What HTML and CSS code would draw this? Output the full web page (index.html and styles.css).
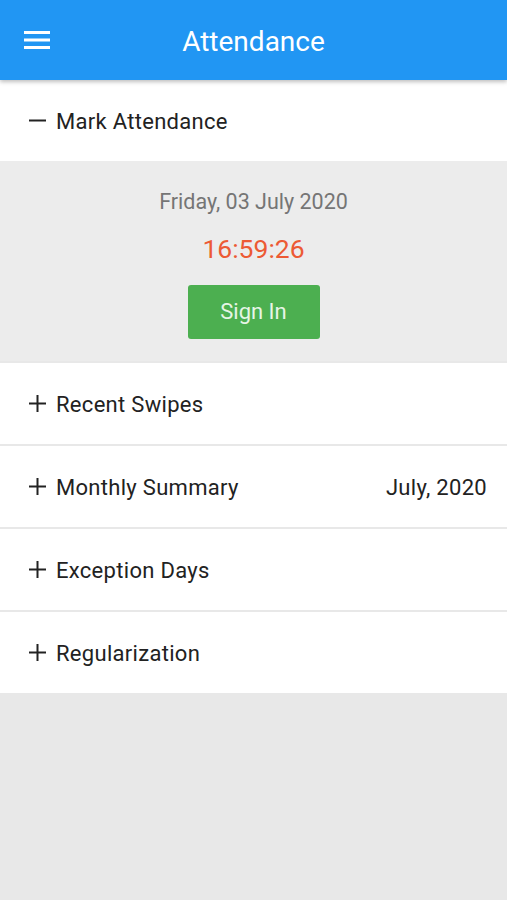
FILE: index.html
```html
<!DOCTYPE html>
<html lang="en">
<head>
    <meta charset="UTF-8">
    <meta name="viewport" content="width=device-width, initial-scale=1.0">
    <title>Attendance</title>
    <link rel="stylesheet" href="styles.css">
</head>
<body>
    <!-- top bar -->
    <header class="app-bar">
        <button class="menu-btn" aria-label="Menu">
            <svg width="26" height="20" viewBox="0 0 26 20">
                <rect x="0" y="1" width="26" height="3" fill="#fff"/>
                <rect x="0" y="8.5" width="26" height="3" fill="#fff"/>
                <rect x="0" y="16" width="26" height="3" fill="#fff"/>
            </svg>
        </button>
        <h1 class="app-title">Attendance</h1>
    </header>

    <main class="content">
        <!-- open section -->
        <section class="panel">
            <div class="panel-head">
                <svg class="toggle" width="17" height="17" viewBox="0 0 17 17">
                    <rect x="0" y="7.5" width="17" height="2" fill="#222"/>
                </svg>
                <span class="panel-title">Mark Attendance</span>
            </div>
            <div class="panel-body">
                <p class="date">Friday, 03 July 2020</p>
                <p class="clock">16:59:26</p>
                <button class="sign-in">Sign In</button>
            </div>
        </section>

        <section class="panel">
            <div class="panel-head">
                <svg class="toggle" width="17" height="17" viewBox="0 0 17 17">
                    <rect x="0" y="7.5" width="17" height="2" fill="#222"/>
                    <rect x="7.5" y="0" width="2" height="17" fill="#222"/>
                </svg>
                <span class="panel-title">Recent Swipes</span>
            </div>
        </section>

        <section class="panel">
            <div class="panel-head">
                <svg class="toggle" width="17" height="17" viewBox="0 0 17 17">
                    <rect x="0" y="7.5" width="17" height="2" fill="#222"/>
                    <rect x="7.5" y="0" width="2" height="17" fill="#222"/>
                </svg>
                <span class="panel-title">Monthly Summary</span>
                <span class="panel-extra">July, 2020</span>
            </div>
        </section>

        <section class="panel">
            <div class="panel-head">
                <svg class="toggle" width="17" height="17" viewBox="0 0 17 17">
                    <rect x="0" y="7.5" width="17" height="2" fill="#222"/>
                    <rect x="7.5" y="0" width="2" height="17" fill="#222"/>
                </svg>
                <span class="panel-title">Exception Days</span>
            </div>
        </section>

        <section class="panel">
            <div class="panel-head">
                <svg class="toggle" width="17" height="17" viewBox="0 0 17 17">
                    <rect x="0" y="7.5" width="17" height="2" fill="#222"/>
                    <rect x="7.5" y="0" width="2" height="17" fill="#222"/>
                </svg>
                <span class="panel-title">Regularization</span>
            </div>
        </section>
    </main>
</body>
</html>
```

FILE: styles.css
```css
/* base */
body {
    margin: 0;
    padding: 0;
    font-family: Roboto, "Noto Sans", sans-serif;
    background: #e8e8e8;
    color: #222;
    min-height: 900px;
}
.app-bar {
    height: 80px;
    background-color: #2196f3;
    display: flex;
    align-items: center;
    position: relative;
    box-shadow: 0 2px 4px rgba(0, 0, 0, 0.25);
    z-index: 1;
}
.menu-btn {
    background: none;
    border: none;
    padding: 0;
    margin-left: 24px;
    width: 26px;
    height: 20px;
    display: flex;
}
.app-title {
    flex: 1;
    margin: 0 0 0 -50px;
    text-align: center;
    color: #fff;
    font-weight: 400;
    font-size: 28px;
    line-height: 32px;
    padding-top: 3px;
}
.content {
    display: flex;
    flex-direction: column;
    gap: 2px;
}
.panel {
    background: #fff;
}
.panel-head {
    height: 81px;
    display: flex;
    align-items: center;
    padding: 0 20px 0 29px;
    background: #fff;
}
.toggle {
    flex: none;
    margin-right: 10px;
}
.panel-title {
    flex: 1;
    font-size: 22px;
    letter-spacing: 0.3px;
    padding-top: 2px;
}
.panel-extra {
    font-size: 22px;
    letter-spacing: 0.3px;
    padding-top: 2px;
}
.panel-body {
    background: #ececec;
    height: 200px;
    display: flex;
    flex-direction: column;
    align-items: center;
}
.date {
    margin: 28px 0 0;
    font-size: 21.5px;
    line-height: 26px;
    color: #757575;
}
.clock {
    margin: 18px 0 0;
    font-size: 26.5px;
    line-height: 32px;
    color: #ec5a34;
}
.sign-in {
    margin-top: 20px;
    width: 132px;
    height: 54px;
    border: none;
    border-radius: 3px;
    background-color: #4caf50;
    color: #e6f5e6;
    font-family: Roboto, sans-serif;
    font-size: 22px;
    padding: 0 0 1px;
}
```
